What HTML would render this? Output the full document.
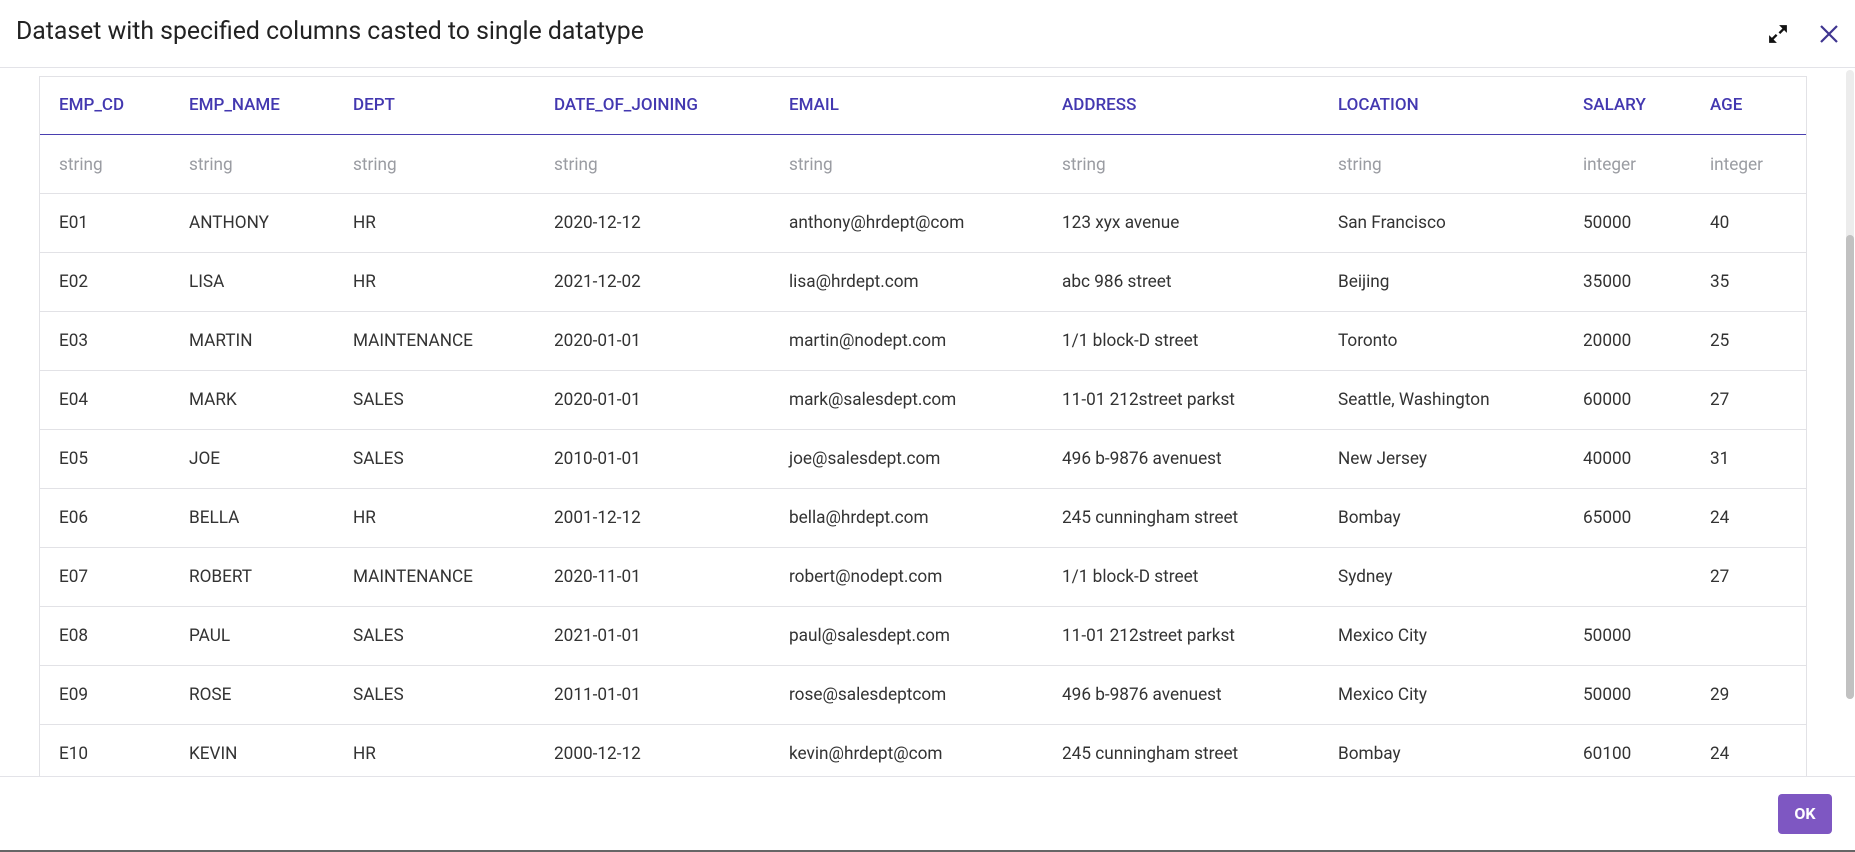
<!DOCTYPE html>
<html><head><style>
*{margin:0;padding:0;box-sizing:border-box}
body{width:1855px;height:852px;background:#fff;font-family:Roboto,"Liberation Sans",sans-serif;position:relative;overflow:hidden;color:#333}
.title{position:absolute;left:16px;top:17px;font-size:24.8px;color:#222;letter-spacing:0}
.hline{position:absolute;left:0;width:1855px;height:1px;background:#e3e3e8}
.body{position:absolute;left:0;top:68px;width:1845px;height:708px;overflow:hidden}
.tbl{position:absolute;left:39px;top:8px;width:1768px;border:1px solid #e2e2e6;border-bottom:none}
.row{position:relative;height:59px;border-bottom:1px solid #e2e2e6;font-size:17.2px}
.row span{position:absolute;top:0;line-height:58px;white-space:nowrap}
.hdr{height:58px;border-bottom:1.5px solid #4a3fb0}
.hdr span{color:#4338b0;font-weight:500;font-size:17px;line-height:56px}
.typ span{color:#9a9ca2;line-height:60px}
.sbt{position:absolute;left:1846px;top:70px;width:8px;height:629px;background:#ececec;border-radius:4px}
.sb{position:absolute;left:1846px;top:235px;width:8px;height:464px;background:#c1c1c1;border-radius:4px}
.ok{position:absolute;left:1778px;top:794px;width:54px;height:40px;background:#7e57c2;border-radius:4px;color:#fff;font-weight:bold;font-size:16px;text-align:center;line-height:40px}
</style></head><body>
<div class="title">Dataset with specified columns casted to single datatype</div>
<svg style="position:absolute;left:1768px;top:24px" width="20" height="20" viewBox="0 0 18 18"><path d="M10 1h7v7l-2.5-2.5-3.5 3.5-1.5-1.5 3.5-3.5zM8 17H1v-7l2.5 2.5 3.5-3.5 1.5 1.5-3.5 3.5z" fill="#111"/></svg>
<svg style="position:absolute;left:1819px;top:24px" width="20" height="20" viewBox="0 0 20 20"><path d="M2 2L18 18M18 2L2 18" stroke="#3f3590" stroke-width="2.2"/></svg>
<div class="hline" style="top:67px"></div>
<div class="body"><div class="tbl">
<div class="row hdr"><span style="left:19px">EMP_CD</span><span style="left:149px">EMP_NAME</span><span style="left:313px">DEPT</span><span style="left:514px">DATE_OF_JOINING</span><span style="left:749px">EMAIL</span><span style="left:1022px">ADDRESS</span><span style="left:1298px">LOCATION</span><span style="left:1543px">SALARY</span><span style="left:1670px">AGE</span></div>
<div class="row typ"><span style="left:19px">string</span><span style="left:149px">string</span><span style="left:313px">string</span><span style="left:514px">string</span><span style="left:749px">string</span><span style="left:1022px">string</span><span style="left:1298px">string</span><span style="left:1543px">integer</span><span style="left:1670px">integer</span></div>
<div class="row"><span style="left:19px">E01</span><span style="left:149px">ANTHONY</span><span style="left:313px">HR</span><span style="left:514px">2020-12-12</span><span style="left:749px">anthony@hrdept@com</span><span style="left:1022px">123 xyx avenue</span><span style="left:1298px">San Francisco</span><span style="left:1543px">50000</span><span style="left:1670px">40</span></div>
<div class="row"><span style="left:19px">E02</span><span style="left:149px">LISA</span><span style="left:313px">HR</span><span style="left:514px">2021-12-02</span><span style="left:749px">lisa@hrdept.com</span><span style="left:1022px">abc 986 street</span><span style="left:1298px">Beijing</span><span style="left:1543px">35000</span><span style="left:1670px">35</span></div>
<div class="row"><span style="left:19px">E03</span><span style="left:149px">MARTIN</span><span style="left:313px">MAINTENANCE</span><span style="left:514px">2020-01-01</span><span style="left:749px">martin@nodept.com</span><span style="left:1022px">1/1 block-D street</span><span style="left:1298px">Toronto</span><span style="left:1543px">20000</span><span style="left:1670px">25</span></div>
<div class="row"><span style="left:19px">E04</span><span style="left:149px">MARK</span><span style="left:313px">SALES</span><span style="left:514px">2020-01-01</span><span style="left:749px">mark@salesdept.com</span><span style="left:1022px">11-01 212street parkst</span><span style="left:1298px">Seattle, Washington</span><span style="left:1543px">60000</span><span style="left:1670px">27</span></div>
<div class="row"><span style="left:19px">E05</span><span style="left:149px">JOE</span><span style="left:313px">SALES</span><span style="left:514px">2010-01-01</span><span style="left:749px">joe@salesdept.com</span><span style="left:1022px">496 b-9876 avenuest</span><span style="left:1298px">New Jersey</span><span style="left:1543px">40000</span><span style="left:1670px">31</span></div>
<div class="row"><span style="left:19px">E06</span><span style="left:149px">BELLA</span><span style="left:313px">HR</span><span style="left:514px">2001-12-12</span><span style="left:749px">bella@hrdept.com</span><span style="left:1022px">245 cunningham street</span><span style="left:1298px">Bombay</span><span style="left:1543px">65000</span><span style="left:1670px">24</span></div>
<div class="row"><span style="left:19px">E07</span><span style="left:149px">ROBERT</span><span style="left:313px">MAINTENANCE</span><span style="left:514px">2020-11-01</span><span style="left:749px">robert@nodept.com</span><span style="left:1022px">1/1 block-D street</span><span style="left:1298px">Sydney</span><span style="left:1670px">27</span></div>
<div class="row"><span style="left:19px">E08</span><span style="left:149px">PAUL</span><span style="left:313px">SALES</span><span style="left:514px">2021-01-01</span><span style="left:749px">paul@salesdept.com</span><span style="left:1022px">11-01 212street parkst</span><span style="left:1298px">Mexico City</span><span style="left:1543px">50000</span></div>
<div class="row"><span style="left:19px">E09</span><span style="left:149px">ROSE</span><span style="left:313px">SALES</span><span style="left:514px">2011-01-01</span><span style="left:749px">rose@salesdeptcom</span><span style="left:1022px">496 b-9876 avenuest</span><span style="left:1298px">Mexico City</span><span style="left:1543px">50000</span><span style="left:1670px">29</span></div>
<div class="row"><span style="left:19px">E10</span><span style="left:149px">KEVIN</span><span style="left:313px">HR</span><span style="left:514px">2000-12-12</span><span style="left:749px">kevin@hrdept@com</span><span style="left:1022px">245 cunningham street</span><span style="left:1298px">Bombay</span><span style="left:1543px">60100</span><span style="left:1670px">24</span></div>
</div></div>
<div class="sbt"></div>
<div class="sb"></div>
<div class="hline" style="top:776px"></div>
<div class="ok">OK</div>
<div class="hline" style="top:850px;height:2px;background:#666"></div>
</body></html>
